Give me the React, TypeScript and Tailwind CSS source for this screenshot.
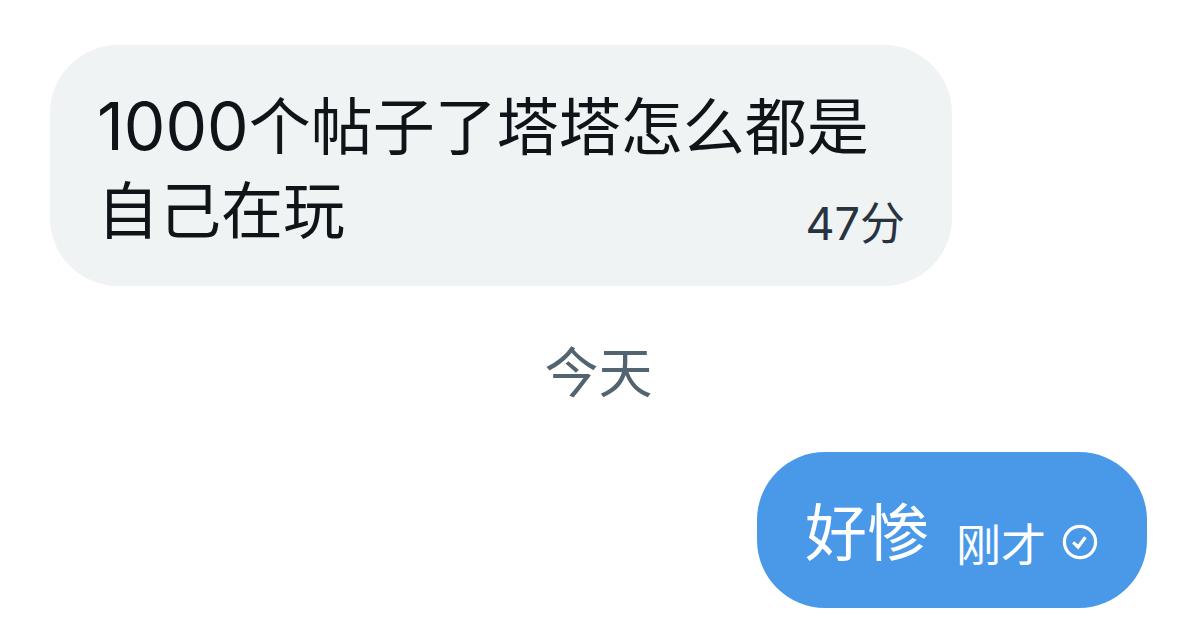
import React from "react";

const INCOMING = {
    count: "1000",
    text: "个帖子了塔塔怎么都是",
    rest: "自己在玩",
    time: "47分",
};

const OUTGOING = { text: "好惨", time: "刚才" };

function SentIcon() {
    return (
        <svg viewBox="0 0 36 36" className="size-9 shrink-0" fill="none" stroke="currentColor" role="img" aria-label="已发送">
            <circle cx="18" cy="18" r="15.6" strokeWidth="3.2" />
            <path d="M11.2 18.4l4.9 4.6 7.3-9.8" strokeWidth="3.2" />
        </svg>
    );
}

export default function App() {
    return (
        <main lang="zh-CN" className="flex flex-col bg-white pt-[45px] pr-[53px] pb-8 pl-[50px] font-['Inter','Noto_Sans_CJK_SC',sans-serif]">
            <div className="w-full max-w-[902px] self-start rounded-[68px] bg-[#eff3f4] px-[47px] pt-[39px] pb-8 text-[62px] leading-[84px] text-[#0f1419]">
                <p className="flex items-baseline">
                    <span className="text-[66px]">{INCOMING.count}</span>
                    <span>{INCOMING.text}</span>
                </p>
                <div className="flex items-end justify-between">
                    <p>{INCOMING.rest}</p>
                    <time className="text-[45px] leading-[60px] text-[#273340]">{INCOMING.time}</time>
                </div>
            </div>

            <h2 className="pt-[52px] pb-[42px] text-center text-[54px] leading-[72px] text-[#536471]">今天</h2>

            <div className="flex items-end self-end rounded-[68px] bg-[#4a99e9] pt-10 pr-[49px] pb-8 pl-12 text-white">
                <p className="text-[62px] leading-[84px]">{OUTGOING.text}</p>
                <time className="pl-[27px] text-[45px] leading-[60px]">{OUTGOING.time}</time>
                <span className="pb-4 pl-4">
                    <SentIcon />
                </span>
            </div>
        </main>
    );
}
